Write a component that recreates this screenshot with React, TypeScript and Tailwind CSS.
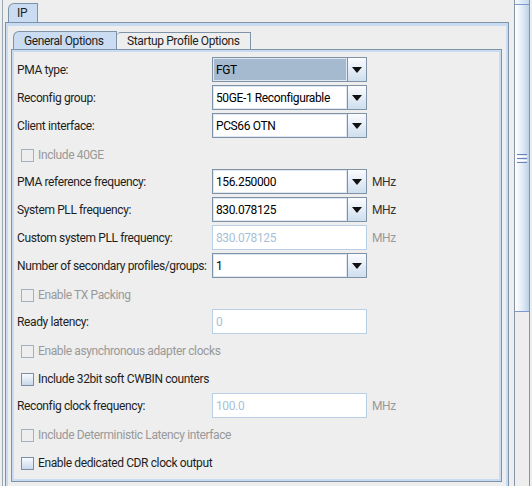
import React from 'react';

type Row =
  | { kind: 'combo'; label: string; value: string; unit?: string; selected?: boolean }
  | { kind: 'field'; label: string; value: string; unit?: string }
  | { kind: 'check'; label: string; disabled?: boolean };

const rows: Row[] = [
  { kind: 'combo', label: 'PMA type:', value: 'FGT', selected: true },
  { kind: 'combo', label: 'Reconfig group:', value: '50GE-1 Reconfigurable' },
  { kind: 'combo', label: 'Client interface:', value: 'PCS66 OTN' },
  { kind: 'check', label: 'Include 40GE', disabled: true },
  { kind: 'combo', label: 'PMA reference frequency:', value: '156.250000', unit: 'MHz' },
  { kind: 'combo', label: 'System PLL frequency:', value: '830.078125', unit: 'MHz' },
  { kind: 'field', label: 'Custom system PLL frequency:', value: '830.078125', unit: 'MHz' },
  { kind: 'combo', label: 'Number of secondary profiles/groups:', value: '1' },
  { kind: 'check', label: 'Enable TX Packing', disabled: true },
  { kind: 'field', label: 'Ready latency:', value: '0' },
  { kind: 'check', label: 'Enable asynchronous adapter clocks', disabled: true },
  { kind: 'check', label: 'Include 32bit soft CWBIN counters' },
  { kind: 'field', label: 'Reconfig clock frequency:', value: '100.0', unit: 'MHz' },
  { kind: 'check', label: 'Include Deterministic Latency interface', disabled: true },
  { kind: 'check', label: 'Enable dedicated CDR clock output' },
];

const Combo: React.FC<{ value: string; selected?: boolean }> = ({ value, selected }) => (
  <div className="flex w-[155px] h-[25px] border border-[#8092a6] bg-white">
    <div
      className={
        'flex-1 flex items-center pl-[2px] border border-[#dfe8f2] whitespace-nowrap overflow-hidden ' +
        (selected ? 'bg-[#a5b9cf]' : 'bg-white')
      }
    >
      {value}
    </div>
    <div className="w-[19px] flex items-center justify-center border-l border-[#8092a6] bg-gradient-to-b from-[#fbfcfe] to-[#cfdeee]">
      <svg width="10" height="6" viewBox="0 0 10 6">
        <path d="M0 0h10L5 6z" fill="#111" />
      </svg>
    </div>
  </div>
);

const Field: React.FC<{ value: string }> = ({ value }) => (
  <div className="flex items-center w-[155px] h-[25px] border border-[#b9cfe6] bg-white pl-[3px] text-[#a9bfd8]">
    {value}
  </div>
);

const CheckBox: React.FC<{ disabled?: boolean }> = ({ disabled }) => (
  <div
    className={
      'w-[13px] h-[13px] border ' +
      (disabled
        ? 'border-[#a3b0bf] bg-[#eeeeee]'
        : 'border-[#7d8ea3] bg-gradient-to-b from-[#f7fafd] to-[#c9d9eb]')
    }
  />
);

const FormRow: React.FC<{ row: Row }> = ({ row }) => {
  if (row.kind === 'check') {
    return (
      <div className={'flex items-center h-[25px] pt-[3px] pl-[4px] ' + (row.disabled ? 'text-[#999999]' : 'text-[#1e1e1e]')}>
        <CheckBox disabled={row.disabled} />
        <span className="ml-[4px]">{row.label}</span>
      </div>
    );
  }
  return (
    <div className="flex items-center h-[25px]">
      <span className="w-[195px] shrink-0 text-[#1e1e1e]">{row.label}</span>
      {row.kind === 'combo' ? <Combo value={row.value} selected={row.selected} /> : <Field value={row.value} />}
      {row.unit && (
        <span className={'ml-[5px] ' + (row.kind === 'combo' ? 'text-[#333333]' : 'text-[#999999]')}>{row.unit}</span>
      )}
    </div>
  );
};

export default function App() {
  return (
    <div
      className="w-[532px] h-[486px] bg-[#eeeeee] overflow-hidden flex text-[12px] tracking-[-0.38px] leading-none whitespace-nowrap"
      style={{ fontFamily: 'Roboto, "Liberation Sans", sans-serif' }}
    >
      <div className="w-[2px] shrink-0" />
      {/* main column */}
      <div className="w-[511px] shrink-0 border-l border-[#9aa7b5] pl-[2px]">
        <div className="h-[22px] pt-[3px] pl-[3px] flex">
          <div className="w-[30px] h-[19px] border border-b-0 border-[#7f93a8] rounded-tl-[6px] bg-[#c9dcf1] flex items-center pl-[8px] text-[#1e1e1e]">
            IP
          </div>
        </div>
        <div className="w-[504px] h-[480px] border border-[#7f93a8]">
          <div className="h-full border-2 border-b-0 border-t-[3px] border-[#c8dbf0] pt-[5px] pl-[3px]">
            {/* inner tabs */}
            <div className="h-[18px] flex pl-[2px] items-end">
              <div className="w-[104px] h-[18px] border border-b-0 border-[#7f93a8] rounded-tl-[6px] bg-[#c9dcf1] flex items-center pl-[10px] text-[#1e1e1e]">
                General Options
              </div>
              <div className="w-[134px] h-[17px] border border-b-0 border-l-0 border-[#7f93a8] rounded-tl-[4px] bg-[#eeeeee] flex items-center pl-[10px] text-[#1e1e1e]">
                Startup Profile Options
              </div>
            </div>
            {/* inner panel */}
            <div className="w-[491px] h-[433px] border border-[#7f93a8]">
              <div className="h-full border-2 border-[#c8dbf0] pt-[5px] pl-[3px] flex flex-col gap-[3px]">
                {rows.map((r, i) => (
                  <FormRow key={i} row={r} />
                ))}
              </div>
            </div>
          </div>
        </div>
      </div>
      {/* scrollbar */}
      <div className="w-[16px] shrink-0 ml-[1px] border-l border-r border-[#8595a8] flex flex-col">
        <div className="h-[4px] bg-gradient-to-r from-[#f8fbfe] to-[#c5d7ec]" />
        <div className="h-[308px] border-t border-b border-[#7d9bd0] bg-gradient-to-r from-[#ffffff] via-[#e4edf7] to-[#bcd1ea] flex flex-col items-center justify-center gap-[1px]">
          <div className="w-[10px] h-[1px] bg-[#6a84b8]" />
          <div className="w-[10px] h-[1px] bg-white" />
          <div className="w-[10px] h-[1px] bg-[#6a84b8]" />
          <div className="w-[10px] h-[1px] bg-white" />
          <div className="w-[10px] h-[1px] bg-[#6a84b8]" />
        </div>
        <div className="flex-1 bg-[#eeeeee]" />
      </div>
    </div>
  );
}
